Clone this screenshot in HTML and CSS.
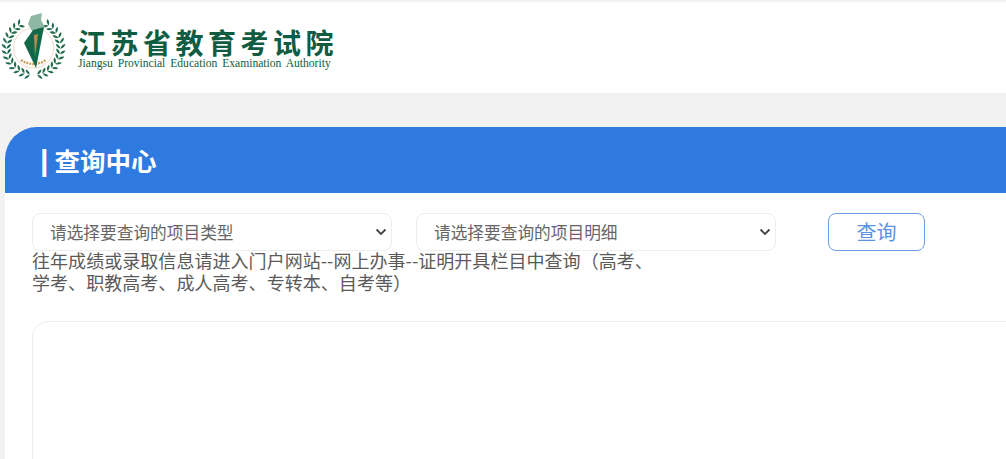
FILE: index.html
```html
<!DOCTYPE html>
<html lang="zh-CN">
<head>
    <meta charset="UTF-8">
    <title>查询中心</title>
    <link rel="stylesheet" href="styles.css">
</head>
<body>

    <header class="site-header">
        <svg class="logo-mark" viewBox="0 0 70 75" width="70" height="75" aria-hidden="true">
            <defs>
                <g id="sprig">
                    <path d="M0 0C-3 -.7 -4.300 -2.200 -4.700 -4.700C-2.200 -4.300 -.7 -3 0 0Z"/>
                    <path d="M0 0C.7 -3 2.200 -4.300 4.700 -4.700C4.300 -2.200 3 -.7 0 0Z"/>
                </g>
            </defs>
            <circle cx="33.500" cy="38" r="20" fill="none" stroke="#f0d9c8" stroke-width="1"/>
            <path d="M21 50Q33.500 58 46 50" fill="none" stroke="#c9a05e" stroke-width="2.500" stroke-dasharray="2 1"/>
            <g fill="#1f6b4c">
                <use href="#sprig" transform="translate(29.700 64.700) rotate(-82)"/>
                <use href="#sprig" transform="translate(24.500 63.500) rotate(-70.500)"/>
                <use href="#sprig" transform="translate(19.600 61.100) rotate(-59)"/>
                <use href="#sprig" transform="translate(15.300 57.900) rotate(-47.500)"/>
                <use href="#sprig" transform="translate(11.700 53.900) rotate(-36)"/>
                <use href="#sprig" transform="translate(8.900 49.200) rotate(-24.500)"/>
                <use href="#sprig" transform="translate(7.200 44.100) rotate(-13)"/>
                <use href="#sprig" transform="translate(6.500 38.700) rotate(-1.500)"/>
                <use href="#sprig" transform="translate(6.900 33.300) rotate(10)"/>
                <use href="#sprig" transform="translate(8.400 28.100) rotate(21.500)"/>
                <use href="#sprig" transform="translate(11 23.300) rotate(33)"/>
                <use href="#sprig" transform="translate(14.200 19.100) rotate(44.500)"/>
                <use href="#sprig" transform="translate(18.400 15.600) rotate(56)"/>
                <use href="#sprig" transform="translate(37.300 64.700) rotate(82)"/>
                <use href="#sprig" transform="translate(42.500 63.500) rotate(70.500)"/>
                <use href="#sprig" transform="translate(47.400 61.100) rotate(59)"/>
                <use href="#sprig" transform="translate(51.700 57.900) rotate(47.500)"/>
                <use href="#sprig" transform="translate(55.300 53.900) rotate(36)"/>
                <use href="#sprig" transform="translate(58.100 49.200) rotate(24.500)"/>
                <use href="#sprig" transform="translate(59.800 44.100) rotate(13)"/>
                <use href="#sprig" transform="translate(60.500 38.700) rotate(1.500)"/>
                <use href="#sprig" transform="translate(60.100 33.300) rotate(-10)"/>
                <use href="#sprig" transform="translate(58.600 28.100) rotate(-21.500)"/>
                <use href="#sprig" transform="translate(56 23.300) rotate(-33)"/>
                <use href="#sprig" transform="translate(52.800 19.100) rotate(-44.500)"/>
                <use href="#sprig" transform="translate(48.600 15.600) rotate(-56)"/>
            </g>
            <path d="M31 6L42 3L41 10L45 17L32 21L28 14Z" fill="#8fb8a4"/>
            <path d="M24 33L33 20L44 17L36 58Z" fill="#14684a"/>
            <path d="M34 25L38 24L35 47Z" fill="#b98a4e"/>
        </svg>
        <div class="logo-text">
            <div class="logo-cn">江苏省教育考试院</div>
            <div class="logo-en">Jiangsu Provincial Education Examination Authority</div>
        </div>
    </header>

    <main class="panel">
        <h1 class="panel-title"><span class="title-bar">|</span>查询中心</h1>
        <div class="panel-body">
            <div class="query-row">
                <select class="query-select">
                    <option>请选择要查询的项目类型</option>
                </select>
                <select class="query-select">
                    <option>请选择要查询的项目明细</option>
                </select>
                <button class="query-btn">查询</button>
            </div>
            <p class="query-note">往年成绩或录取信息请进入门户网站--网上办事--证明开具栏目中查询（高考、学考、职教高考、成人高考、专转本、自考等）</p>
            <div class="result-box"></div>
        </div>
    </main>

</body>
</html>
```

FILE: styles.css
```css
* {
    margin: 0;
    padding: 0;
    box-sizing: border-box;
    font-family: "Noto Sans CJK SC", "Noto Sans", sans-serif;
}

html, body {
    height: 459px;
    overflow: hidden;
}

body {
    background: #f2f2f2;
    padding-top: 2px;
}

.site-header {
    height: 91px;
    background: #fff;
    display: flex;
    align-items: flex-start;
    gap: 8px;
    padding-top: 8px;
}

.logo-mark {
    flex: none;
}

.logo-text {
    padding-top: 17px;
    color: #0f5c42;
}

.logo-cn {
    font-size: 28px;
    font-weight: 700;
    line-height: 31px;
    letter-spacing: 4.5px;
    white-space: nowrap;
}

.logo-en {
    font-family: "Liberation Serif", serif;
    font-size: 11.6px;
    line-height: 12px;
    word-spacing: 2px;
    white-space: nowrap;
}

.panel {
    margin: 34px 0 0 5px;
    background: #fff;
    height: 332px;
    border-top-left-radius: 32px;
}

.panel-title {
    height: 66px;
    background: #2f7ae0;
    border-top-left-radius: 32px;
    color: #fff;
    font-size: 25.5px;
    font-weight: 700;
    line-height: 66px;
    padding-left: 35px;
    white-space: nowrap;
}

.title-bar {
    font-family: "Liberation Sans", sans-serif;
    font-size: 30px;
    margin-right: 6px;
}

.panel-body {
    padding: 20px 0 0 27px;
    width: 1040px;
}

.query-row {
    display: flex;
    gap: 24px;
}

.query-select {
    appearance: none;
    width: 360px;
    height: 38px;
    padding-left: 17px;
    background: #fff url("data:image/svg+xml,%3Csvg xmlns='http://www.w3.org/2000/svg' width='12' height='8'%3E%3Cpath d='M1.500 1.500L6 6L10.500 1.500' fill='none' stroke='%23444' stroke-width='1.800'/%3E%3C/svg%3E") no-repeat right 4px center;
    border: 1px solid #eee;
    border-radius: 8px;
    color: #666;
    font-size: 16.7px;
    outline: none;
}

.query-btn {
    width: 97px;
    height: 38px;
    margin-left: 28px;
    padding-bottom: 2px;
    background: #fff;
    border: 1px solid #6a9ee2;
    border-radius: 8px;
    color: #5b93e0;
    font-size: 20px;
    cursor: pointer;
}

.query-note {
    width: 630px;
    margin-top: -2px;
    color: #5a5a5a;
    font-size: 18px;
    line-height: 22px;
    letter-spacing: 0.05px;
}

.result-box {
    margin-top: 28px;
    height: 200px;
    background: #fff;
    border: 1px solid #eee;
    border-radius: 16px;
}
```
